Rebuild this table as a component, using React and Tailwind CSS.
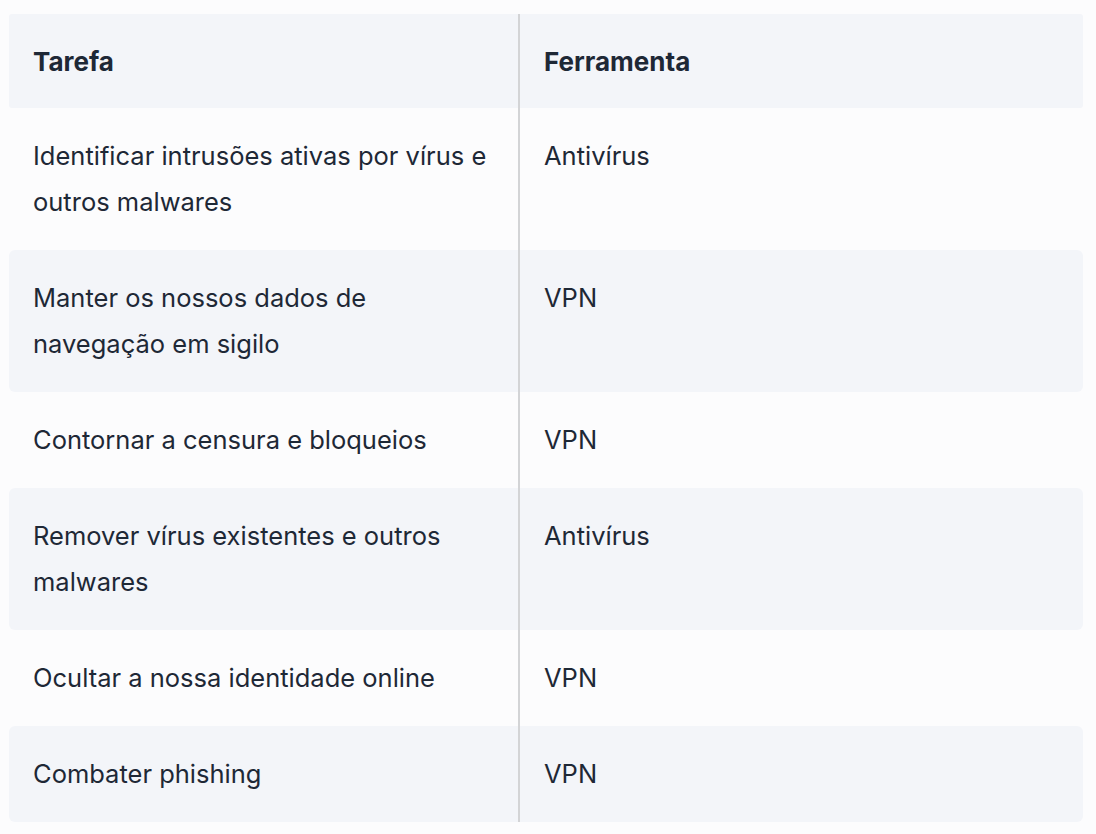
import React from "react";

const rows = [
  { task: ["Identificar intrusões ativas por vírus e", "outros malwares"], tool: "Antivírus" },
  { task: ["Manter os nossos dados de", "navegação em sigilo"], tool: "VPN" },
  { task: ["Contornar a censura e bloqueios"], tool: "VPN" },
  { task: ["Remover vírus existentes e outros", "malwares"], tool: "Antivírus" },
  { task: ["Ocultar a nossa identidade online"], tool: "VPN" },
  { task: ["Combater phishing"], tool: "VPN" },
];

export default function App() {
  return (
    <div
      className="min-h-[834px] w-full bg-[#fcfcfd] pt-[14px] pl-[9px] pr-[13px] text-[#1e2836]"
      style={{ fontFamily: '"Inter", "Noto Sans", sans-serif' }}
    >
      <div className="flex flex-col">
        {/* Cabeçalho */}
        <div className="flex h-[94px] items-stretch rounded-[3px] bg-[#f3f5f9] font-bold text-[26px]">
          <div className="flex w-[511px] items-center border-r-2 border-[#d3d4d6] pl-6">Tarefa</div>
          <div className="flex flex-1 items-center pl-6">Ferramenta</div>
        </div>

        {rows.map((row, i) => (
          <div
            key={i}
            className={`flex items-stretch rounded-md text-[25.5px] leading-[46px] ${
              i % 2 === 1 ? "bg-[#f3f5f9]" : "bg-transparent"
            }`}
          >
            <div className="w-[511px] border-r-2 border-[#d3d4d6] py-[25px] pl-6">
              {row.task.map((line, j) => (
                <div key={j} className="whitespace-nowrap">{line}</div>
              ))}
            </div>
            <div className="flex-1 py-[25px] pl-6">{row.tool}</div>
          </div>
        ))}
      </div>
    </div>
  );
}
